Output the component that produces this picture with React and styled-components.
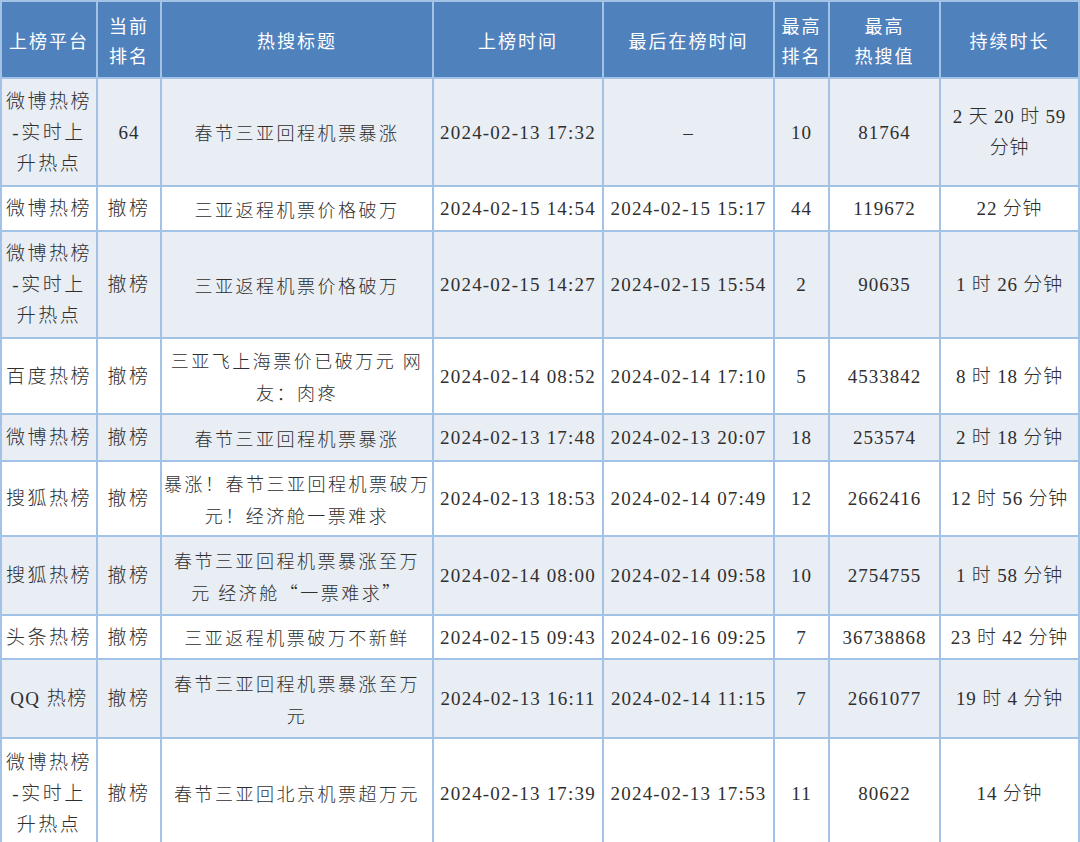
import React from 'react'
import styled, { createGlobalStyle } from 'styled-components'

const GlobalStyle = createGlobalStyle`
  html, body {
    margin: 0;
    padding: 0;
    background: #ffffff;
  }
  body {
    font-family: "Liberation Serif", "Noto Sans CJK SC", serif;
  }
`

const columns = [
  { title: ['上榜平台'], width: 96 },
  { title: ['当前', '排名'], width: 64 },
  { title: ['热搜标题'], width: 272 },
  { title: ['上榜时间'], width: 170 },
  { title: ['最后在榜时间'], width: 171 },
  { title: ['最高', '排名'], width: 55 },
  { title: ['最高', '热搜值'], width: 111 },
  { title: ['持续时长'], width: 139 },
]

const rows = [
  {
    height: 108,
    platform: ['微博热榜', '-实时上', '升热点'],
    rank: '64',
    title: ['春节三亚回程机票暴涨'],
    start: '2024-02-13 17:32',
    end: '–',
    best: '10',
    heat: '81764',
    duration: ['2 天 20 时 59', '分钟'],
  },
  {
    height: 45,
    platform: ['微博热榜'],
    rank: '撤榜',
    title: ['三亚返程机票价格破万'],
    start: '2024-02-15 14:54',
    end: '2024-02-15 15:17',
    best: '44',
    heat: '119672',
    duration: ['22 分钟'],
  },
  {
    height: 107,
    platform: ['微博热榜', '-实时上', '升热点'],
    rank: '撤榜',
    title: ['三亚返程机票价格破万'],
    start: '2024-02-15 14:27',
    end: '2024-02-15 15:54',
    best: '2',
    heat: '90635',
    duration: ['1 时 26 分钟'],
  },
  {
    height: 76,
    platform: ['百度热榜'],
    rank: '撤榜',
    title: ['三亚飞上海票价已破万元 网', '友：肉疼'],
    start: '2024-02-14 08:52',
    end: '2024-02-14 17:10',
    best: '5',
    heat: '4533842',
    duration: ['8 时 18 分钟'],
  },
  {
    height: 47,
    platform: ['微博热榜'],
    rank: '撤榜',
    title: ['春节三亚回程机票暴涨'],
    start: '2024-02-13 17:48',
    end: '2024-02-13 20:07',
    best: '18',
    heat: '253574',
    duration: ['2 时 18 分钟'],
  },
  {
    height: 75,
    platform: ['搜狐热榜'],
    rank: '撤榜',
    title: ['暴涨！春节三亚回程机票破万', '元！经济舱一票难求'],
    start: '2024-02-13 18:53',
    end: '2024-02-14 07:49',
    best: '12',
    heat: '2662416',
    duration: ['12 时 56 分钟'],
  },
  {
    height: 79,
    platform: ['搜狐热榜'],
    rank: '撤榜',
    title: ['春节三亚回程机票暴涨至万', '元 经济舱“一票难求”'],
    start: '2024-02-14 08:00',
    end: '2024-02-14 09:58',
    best: '10',
    heat: '2754755',
    duration: ['1 时 58 分钟'],
  },
  {
    height: 44,
    platform: ['头条热榜'],
    rank: '撤榜',
    title: ['三亚返程机票破万不新鲜'],
    start: '2024-02-15 09:43',
    end: '2024-02-16 09:25',
    best: '7',
    heat: '36738868',
    duration: ['23 时 42 分钟'],
  },
  {
    height: 79,
    platform: ['QQ 热榜'],
    rank: '撤榜',
    title: ['春节三亚回程机票暴涨至万', '元'],
    start: '2024-02-13 16:11',
    end: '2024-02-14 11:15',
    best: '7',
    heat: '2661077',
    duration: ['19 时 4 分钟'],
  },
  {
    height: 110,
    platform: ['微博热榜', '-实时上', '升热点'],
    rank: '撤榜',
    title: ['春节三亚回北京机票超万元'],
    start: '2024-02-13 17:39',
    end: '2024-02-13 17:53',
    best: '11',
    heat: '80622',
    duration: ['14 分钟'],
  },
]

function Lines({ lines }) {
  return lines.map((line, i) => (
    <React.Fragment key={i}>
      {i > 0 && <br />}
      {line}
    </React.Fragment>
  ))
}

export default function App() {
  return (
    <>
      <GlobalStyle />
      <Page>
        <Table>
          <colgroup>
            {columns.map((c, i) => (
              <col key={i} style={{ width: c.width }} />
            ))}
          </colgroup>
          <thead>
            <HeadRow>
              {columns.map((c, i) => (
                <HeadCell key={i}>
                  <Lines lines={c.title} />
                </HeadCell>
              ))}
            </HeadRow>
          </thead>
          <tbody>
            {rows.map((r, i) => (
              <Row key={i} $h={r.height} $shaded={i % 2 === 0}>
                <Cell $spacing={r.platform[0].startsWith('QQ') ? '1.5px' : '2.5px'}>
                  <Lines lines={r.platform} />
                </Cell>
                <Cell $spacing={r.rank === '撤榜' ? '2.5px' : '1px'}>{r.rank}</Cell>
                <TitleCell>
                  <Lines lines={r.title} />
                </TitleCell>
                <Cell $spacing="1.2px">{r.start}</Cell>
                <Cell $spacing="1.2px">{r.end}</Cell>
                <Cell>{r.best}</Cell>
                <Cell>{r.heat}</Cell>
                <Cell $spacing="0.8px">
                  <Lines lines={r.duration} />
                </Cell>
              </Row>
            ))}
          </tbody>
        </Table>
      </Page>
    </>
  )
}

const Page = styled.div`
  width: 1080px;
  height: 842px;
  overflow: hidden;
`

const Table = styled.table`
  table-layout: fixed;
  border-collapse: collapse;
  width: 1079px;
  border: 2px solid #a2c3e6;
`

const HeadRow = styled.tr`
  height: 77px;
  background: #4f81bd;
`

const HeadCell = styled.th`
  border: 2px solid #a2c3e6;
  padding: 0 2px;
  color: #ffffff;
  font-family: "Noto Sans CJK SC", sans-serif;
  font-weight: 400;
  font-size: 18px;
  line-height: 30px;
  letter-spacing: 2px;
  text-align: center;
  vertical-align: middle;
`

const Row = styled.tr`
  height: ${(p) => p.$h}px;
  background: ${(p) => (p.$shaded ? '#e9edf4' : '#ffffff')};
`

const Cell = styled.td`
  border: 2px solid #a2c3e6;
  padding: 0 2px;
  color: #2f2f2f;
  font-family: "Liberation Serif", "Noto Sans CJK SC", serif;
  font-weight: 300;
  font-size: 19px;
  line-height: 31px;
  letter-spacing: ${(p) => p.$spacing || '1px'};
  text-align: center;
  vertical-align: middle;
  white-space: nowrap;
`

const TitleCell = styled(Cell)`
  font-family: "Noto Sans CJK SC", sans-serif;
  font-size: 18px;
  line-height: 32px;
  letter-spacing: 2.5px;
`
